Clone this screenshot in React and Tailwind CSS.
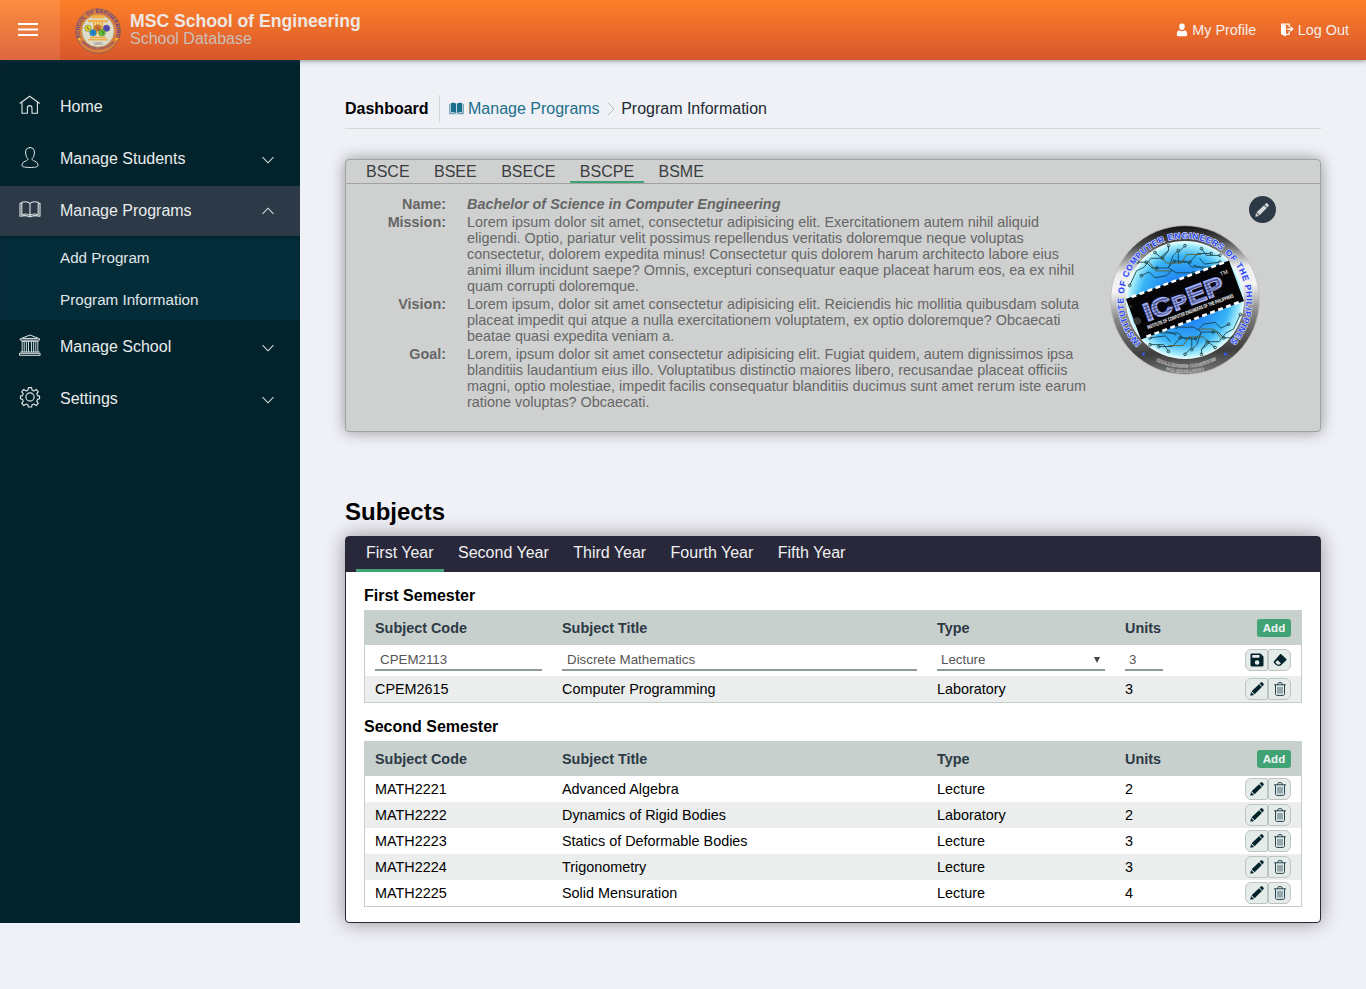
import React from "react";

const line = { fill: "none", stroke: "currentColor", strokeLinecap: "round", strokeLinejoin: "round" };

function HomeIcon() {
  return (
    <svg width="22" height="22" viewBox="0 0 22 22" {...line} strokeWidth="1.1">
      <path d="M1 9.200 10.700 2.200l9.700 7M3 8.200v11.100h5.400v-5.100a2.300 2.600 0 0 1 4.600 0v5.100h5.400V8.200" />
    </svg>
  );
}

function StudentIcon() {
  return (
    <svg width="22" height="22" viewBox="0 -.8 22 22" {...line} strokeWidth="1">
      <path d="M11 .8C8 .8 6.600 2.500 6.600 5.200c0 3.300.9 5.500 2.300 6.600.2 1.300-.7 1.900-2.400 2.500-2.300.8-3.500 2.200-3.500 4.600 0 1.200 3.600 1.800 8 1.800s8-.6 8-1.800c0-2.400-1.200-3.800-3.500-4.600-1.700-.6-2.600-1.200-2.400-2.500 1.400-1.100 2.300-3.300 2.300-6.600C15.400 2.500 14 .8 11 .8Z" />
    </svg>
  );
}

function BookIcon() {
  return (
    <svg width="22" height="22" viewBox="0 0 22 22" {...line} strokeWidth="1.1">
      <path d="M11 5.500C9.600 3.800 6.500 3.400 2.800 4.300v12.200c3.700-.8 6.800-.5 8.200.9 1.400-1.400 4.500-1.700 8.200-.9V4.300C15.500 3.400 12.400 3.800 11 5.500Zm0 0v11.900M2.600 5.300H1v12.900c3.500-.7 6.500-.7 8.500 0 .8.600 2.200.6 3 0 2-.7 5-.7 8.500 0V5.300h-1.600" />
    </svg>
  );
}

function SchoolIcon() {
  return (
    <svg width="22" height="22" viewBox="0 0 22 22" {...line} strokeWidth="1">
      <path d="M1.500 4.800 11 1l9.500 3.800v1.300h-19ZM4 4.400h14M2.800 7.300h16.400M1.800 18h18.400M.9 19.300h20.200v2H.9Z" />
      <path strokeWidth=".9" d="M3.200 8v9.500M5.200 8v9.500M7.400 8v9.500M9.500 8v9.500M12.500 8v9.500M14.600 8v9.500M16.800 8v9.500M18.800 8v9.500" />
    </svg>
  );
}

function GearIcon() {
  return (
    <svg width="22" height="22" viewBox="0 0 24 24" {...line} strokeWidth="1.300">
      <circle cx="12" cy="12" r="4.500" />
      <path d="M10.300 1.800h3.400l.6 2.800 1.900.8 2.500-1.600 2.300 2.300-1.600 2.500.8 1.900 2.200.6v2.800l-2.200.7-.8 1.900 1.600 2.500-2.300 2.300-2.500-1.600-1.900.8-.6 2.400h-3.400l-.6-2.400-1.900-.8-2.500 1.600-2.300-2.300 1.600-2.500-.8-1.900-2.200-.7v-2.800l2.200-.6.8-1.900-1.600-2.500 2.300-2.300 2.500 1.600 1.900-.8Z" />
    </svg>
  );
}

function Chevron({ up }) {
  return (
    <svg width="12" height="8" viewBox="0 0 12 8" {...line} stroke="#ced5d7" strokeWidth="1.050">
      <path d={up ? "M.8 6.600 6 1.200l5.200 5.400" : "M.8 1.400 6 6.800l5.200-5.400"} />
    </svg>
  );
}

function PencilIcon() {
  return (
    <svg width="14" height="14" viewBox="0 0 14 14" fill="currentColor">
      <path d="M.3 13.700 1 9.900l3.100 3.100ZM1.600 9.200 9 2.200l2.900 2.900-7.300 7.200ZM9.600 1.600 10.700.5c.6-.5 1.300-.4 1.800 0l.9.900c.5.500.5 1.200 0 1.800l-1.100 1.200Z" />
    </svg>
  );
}

function TrashIcon() {
  return (
    <svg className="text-[#24444f]" width="14" height="14" viewBox="0 0 14 14" {...line} strokeWidth="1">
      <path d="M1.500 2.800h11M4.600 2.600C4.600 1.300 5.200.7 6 .7h2c.8 0 1.400.6 1.400 1.900M2.500 3.200v8.600c0 1.100.5 1.600 1.400 1.600h6.200c.9 0 1.400-.5 1.400-1.600V3.200" />
      <path d="M5 5.300v5.900M7 5.300v5.900M9 5.300v5.900" strokeWidth=".8" />
    </svg>
  );
}

function SaveIcon() {
  return (
    <svg width="14" height="14" viewBox="0 0 14 14">
      <path fill="currentColor" fillRule="evenodd" d="M1.700.6h8.800l3 2.900v8.800c0 .7-.5 1.200-1.200 1.200H1.700c-.7 0-1.200-.5-1.200-1.200V1.800C.5 1.100 1 .6 1.700.6ZM2.300 2v2.800h7.200V2Zm4.800 5.200a2.300 2.300 0 1 0 0 4.600 2.300 2.300 0 0 0 0-4.600Z" />
    </svg>
  );
}

function EraserIcon() {
  return (
    <svg width="14" height="14" viewBox="0 0 14 14">
      <path fill="currentColor" fillRule="evenodd" d="M8.300 1.300 13.300 6c.4.400.4.900 0 1.300l-5 4.700c-1.200 1.100-4.100 1.200-5.200.1L1 9.900c-.5-.5-.5-1.100 0-1.600l6-7c.4-.4.900-.4 1.300 0ZM4.600 7.200 2.200 9.300l2 1.900c.7.600 1.900.6 2.700 0l1-.9Z" />
    </svg>
  );
}

function UserIcon() {
  return (
    <svg width="12" height="14" viewBox="0 0 12 14" fill="#fff">
      <path d="M6 .6c1.900 0 2.800 1.100 2.800 3S7.600 7.200 6 7.200 3.200 5.500 3.200 3.600 4.100.6 6 .6ZM3.200 7.300C4.800 8.500 7.200 8.500 8.800 7.300c1.600.5 2.400 2 2.400 4.300 0 .9-.5 1.600-1.400 1.600H2.200c-.9 0-1.400-.7-1.400-1.600 0-2.300.8-3.800 2.400-4.300Z" />
    </svg>
  );
}

function ExitIcon() {
  return (
    <svg width="14" height="14" viewBox="0 0 14 14">
      <path fill="#fff" d="M1 .9 6 2.400v11L1 11.300Z" />
      <path {...line} stroke="#fff" strokeLinecap="butt" strokeWidth="1.300" d="M1.200 1.200h8v2.900M6 11.300h3.200V8.200" />
      <path fill="#fff" d="M7.200 5.400h3.300V3.100l3.300 3-3.300 3V6.900H7.200Z" />
    </svg>
  );
}

function OpenBookIcon() {
  return (
    <svg width="15" height="13" viewBox="0 0 15 13" fill="currentColor">
      <path d="M7.100 1.800C6 .7 4.200.6 2 1v9.500c2-.4 3.800-.2 5.100.8ZM7.900 1.800C9 .7 10.800.6 13 1v9.500c-2-.4-3.800-.2-5.100.8Z" />
      <path opacity=".65" d="M1.500 1.800H.2v10.400h14.600V1.800h-1.300v9.400c-2.400-.4-4.200-.2-6 .8-1.800-1-3.600-1.200-6-.8Z" />
    </svg>
  );
}

function SchoolSeal() {
  const balls = [[13, 20.300, "#d8cf2a"], [22.700, 20, "#dd7426"], [31.500, 20.300, "#5146c4"], [18, 24.800, "#1d8fd8"], [27, 24.800, "#5cbd2b"]];
  return (
    <svg width="46" height="46" viewBox="0 0 46 46" fontFamily="Liberation Sans, sans-serif">
      <defs>
        <path id="sealTop" d="M5.600 29.800A18.500 18.500 0 1 1 40.400 29.800" />
        <path id="sealBottom" d="M6.500 34A21.400 21.400 0 0 0 39.500 34" />
      </defs>
      <circle cx="23" cy="23" r="22.200" fill="#dc8038" stroke="#80605a" strokeWidth=".8" />
      <circle cx="23" cy="23" r="16.300" fill="#dcdccb" stroke="#b48a51" strokeWidth=".7" />
      <path fill="#efb04c" d="M18 7h10l2 3.500H16ZM13 12h20v2.300H13ZM18 14.300h10v12H18ZM15 28.500h16v2H15ZM13 31h20v1.600H13Z" />
      <path stroke="#f7dfa2" strokeWidth="1" d="M20.500 14v14M23 14v14M25.500 14v14" />
      {balls.map(([x, y, c]) => (
        <circle key={x} cx={x} cy={y} r="3.300" fill={c} stroke="#62664b" strokeWidth=".4" />
      ))}
      <path d="m12 19 2 3m8-3 2 3m7-3 2 3m-16 1 2 3m8-3 2 3" stroke="#3c4657" strokeWidth=".8" />
      <text x="23" y="37.300" fontSize="4" textAnchor="middle" fill="#6c655e">1995</text>
      <text fontSize="5.300" fontWeight="700" fill="#693c89">
        <textPath href="#sealTop" textLength="70" lengthAdjust="spacing">SCHOOL OF ENGINEERING</textPath>
      </text>
      <text fontSize="3.300" fontWeight="700" fill="#693c89">
        <textPath href="#sealBottom" textLength="37" lengthAdjust="spacingAndGlyphs">MARINDUQUE STATE COLLEGE</textPath>
      </text>
      <circle cx="4.200" cy="31" r="1.200" fill="#ffbb27" />
      <circle cx="41.800" cy="31" r="1.200" fill="#ffbb27" />
    </svg>
  );
}

function Circuit() {
  return (
    <g fill="none" stroke="#183e46" strokeWidth=".9">
      <path d="M18 60l7-15 8-4 7-9 12 0 6-8 0-5M26 36l9 0 6 6 16 0 7-7 12 0 6 6 20 0M44 26l6 5 8-7M68 24l-5 5-5 13 8 5 18 0M75 19l-7 7 0 10 12 0 8-9 14 0M92 22l5 7 14 0M90 32l5 6 16-2M30 50l8-4 6 6 12-2 6-6M84 39l11 4" />
      <path stroke="#635c21" d="M50 30l6 7 15 0 6-9 15 0M38 36l7 9 15 0" />
      {[[18, 60], [26, 36], [44, 26], [58, 19], [68, 24], [75, 19], [92, 22], [102, 27], [111, 29], [111, 36], [30, 50], [84, 47], [52, 32], [35, 36], [64, 35], [80, 36], [46, 42]].map(([x, y]) => (
        <circle key={x + "-" + y} cx={x} cy={y} r="1.400" />
      ))}
    </g>
  );
}

function ProgramSeal() {
  const pins = Array.from({ length: 12 }, (_, i) => i);
  return (
    <svg width="150" height="150" viewBox="0 0 150 150" fontFamily="Liberation Sans, sans-serif">
      <defs>
        <linearGradient id="ring" x1=".47" y1="0" x2=".53" y2="1">
          <stop offset="0" stopColor="#111" />
          <stop offset=".12" stopColor="#4d4d4d" />
          <stop offset=".3" stopColor="#eee" />
          <stop offset=".42" stopColor="#f4f4f4" />
          <stop offset=".6" stopColor="#888" />
          <stop offset=".85" stopColor="#3e3e3e" />
          <stop offset="1" stopColor="#777" />
        </linearGradient>
        <radialGradient id="core">
          <stop offset="0" stopColor="#2f4ff2" />
          <stop offset=".4" stopColor="#2288f4" />
          <stop offset=".75" stopColor="#38b4f5" />
          <stop offset=".93" stopColor="#a4ecfb" />
          <stop offset="1" stopColor="#f2ffff" />
        </radialGradient>
        <path id="ringTop" d="M31.100 118A61.500 61.500 0 1 1 118.900 118" />
        <path id="ringLow" d="M36 130A67.500 67.500 0 0 0 114 130" />
        <path id="ringLowest" d="M43 140.300A72.700 72.700 0 0 0 107 140.300" />
      </defs>
      <circle cx="75" cy="75" r="74.300" fill="url(#ring)" stroke="#b4b6b6" strokeWidth=".7" />
      <circle cx="75" cy="75" r="59" fill="url(#core)" />
      <g transform="translate(75 75) scale(.97) translate(-75 -75)">
        <Circuit />
        <g transform="rotate(180 75 75)"><Circuit /></g>
      </g>
      <text fontSize="8.400" fontWeight="700" fill="#2743ef" stroke="#dce2ff" strokeWidth="1.200" paintOrder="stroke">
        <textPath href="#ringTop" textLength="286">INSTITUTE OF COMPUTER ENGINEERS OF THE PHILIPPINES</textPath>
      </text>
      <text fontSize="4.200" fill="#333" stroke="#ccc" strokeWidth=".7" paintOrder="stroke">
        <textPath href="#ringLow" startOffset="12" textLength="62">CHALLENGING OURSELVES</textPath>
      </text>
      <text fontSize="3.900" fill="#333" stroke="#ccc" strokeWidth=".7" paintOrder="stroke">
        <textPath href="#ringLowest" startOffset="14" textLength="38">FOR EXCELLENCE</textPath>
      </text>
      <circle cx="33.500" cy="129" r="1.600" fill="#3157ee" />
      <circle cx="115.500" cy="129" r="1.600" fill="#3157ee" />
      <g transform="translate(75 75) rotate(-20.500)">
        <rect x="-55" y="-21.500" width="110" height="43" fill="#050507" />
        {pins.map((i) => (
          <path key={i} d={`M${-49 + i * 8.500} -21.500h5M${-49 + i * 8.500} 21h5`} stroke="#fff" strokeWidth="2.600" />
        ))}
        <circle cx="-53" cy="-13" r="1.700" fill="#272727" />
        <circle cx="-52" cy="3" r="3.700" fill="#333" />
        <g fontSize="25" fontWeight="700" fill="#6570a8" stroke="#a4b0f8" strokeWidth="1.500">
          <text x="-43" y="7" textLength="29" lengthAdjust="spacingAndGlyphs">IC</text>
          <text x="-13" y="7" fontSize="19" textLength="15" lengthAdjust="spacingAndGlyphs">P</text>
          <text x="3" y="7" textLength="38" lengthAdjust="spacingAndGlyphs">EP</text>
        </g>
        <path d="M-42-8h80M-42-5h80M-42-2h80M-42 1h80M-42 4h80" stroke="#171b3b" strokeWidth=".5" />
        <text x="42" y="-10" fontSize="5.500" fill="#fff">TM</text>
        <g transform="translate(-45 14.500) scale(.59 1)">
          <text fontSize="5.300" fontWeight="700" fill="#fff">INSTITUTE OF COMPUTER ENGINEERS OF THE PHILIPPINES</text>
        </g>
      </g>
    </svg>
  );
}

function NavItem({ icon, label, arrow, active }) {
  return (
    <a className={"flex h-[50px] items-center pr-[26px] pl-[19px] text-[#e8ecec] " + (active ? "bg-[#2c3946]" : "")}>
      <span className="-mt-1 w-[41px] text-[#dfe5e6]">{icon}</span>
      <span className="-mt-px flex-1">{label}</span>
      {arrow && <span className={arrow === "up" ? "" : "mt-0.5"}><Chevron up={arrow === "up"} /></span>}
    </a>
  );
}

function Sidebar() {
  return (
    <nav className="flex h-[863px] w-[300px] shrink-0 flex-col gap-0.5 bg-[#03232c] pt-[22px]">
      <NavItem icon={<HomeIcon />} label="Home" />
      <NavItem icon={<StudentIcon />} label="Manage Students" arrow="down" />
      <div>
        <NavItem icon={<BookIcon />} label="Manage Programs" arrow="up" active />
        <div className="h-[84px] bg-[#042d39] pt-px text-[15.200px] text-[#e0e5e7] shadow-[inset_0_2px_2px_rgba(0,0,0,0.2)]">
          <a className="flex h-[42px] items-center pl-[60px]">Add Program</a>
          <a className="flex h-[42px] items-center pl-[60px]">Program Information</a>
        </div>
      </div>
      <NavItem icon={<SchoolIcon />} label="Manage School" arrow="down" />
      <NavItem icon={<GearIcon />} label="Settings" arrow="down" />
    </nav>
  );
}

function Header() {
  return (
    <header className="relative z-10 flex h-[60px] items-center bg-linear-to-b from-[#fd8029] to-[#d8562b] text-[#f5efec] shadow-[0_1px_5px_rgba(40,60,75,0.5)]">
      <button className="flex h-[60px] w-[60px] items-center bg-white/10 pl-[18px]" aria-label="Menu">
        <svg className="-mt-px" width="20" height="13" viewBox="0 0 20 13" fill="#fff">
          <path d="M0 0h20v2H0zM0 5.600h20v2H0zM0 11h20v2H0z" />
        </svg>
      </button>
      <div className="mt-px ml-[15px]"><SchoolSeal /></div>
      <div className="-mt-0.5 ml-[9px]">
        <h1 className="text-[17.600px] leading-5 font-bold text-[#eee8e4]">MSC School of Engineering</h1>
        <p className="text-base leading-4 text-[#cbbfb9]">School Database</p>
      </div>
      <div className="mt-px mr-[17px] ml-auto flex items-center gap-[23.500px] text-[14.400px]">
        <a className="flex items-center gap-1"><UserIcon />My Profile</a>
        <a className="flex items-center gap-1"><ExitIcon />Log Out</a>
      </div>
    </header>
  );
}

const mission = "Lorem ipsum dolor sit amet, consectetur adipisicing elit. Exercitationem autem nihil aliquid eligendi. Optio, pariatur velit possimus repellendus veritatis doloremque neque voluptas consectetur, dolorem expedita minus! Consectetur quis dolorem harum architecto labore eius animi illum incidunt saepe? Omnis, excepturi consequatur eaque placeat harum eos, ea ex nihil quam corrupti doloremque.";
const vision = "Lorem ipsum, dolor sit amet consectetur adipisicing elit. Reiciendis hic mollitia quibusdam soluta placeat impedit qui atque a nulla exercitationem voluptatem, ex optio doloremque? Obcaecati beatae quasi expedita veniam a.";
const goal = "Lorem, ipsum dolor sit amet consectetur adipisicing elit. Fugiat quidem, autem dignissimos ipsa blanditiis laudantium eius illo. Voluptatibus distinctio maiores libero, recusandae placeat officiis magni, optio molestiae, impedit facilis consequatur blanditiis ducimus sunt amet rerum iste earum ratione voluptas? Obcaecati.";

function ProgramCard() {
  return (
    <section className="mt-[30px] h-[273px] rounded-[4px] border border-[#9fa5a5] bg-[#cfd1d0] shadow-[0_0_15px_rgba(0,0,0,0.4)]">
      <div className="flex h-6 gap-[4.450px] border-b border-[#a4a1a3] pl-2.5 text-[#3a3d40]">
        {["BSCE", "BSEE", "BSECE", "BSCPE", "BSME"].map((t) => (
          <a key={t} className={"h-[23px] border-b-2 px-2.5 leading-[23px] " + (t === "BSCPE" ? "border-[#41a375]" : "border-transparent")}>{t}</a>
        ))}
      </div>
      <div className="flex pt-3 text-[14.400px] leading-4 text-[#666]">
        <dl className="grid w-[745px] grid-cols-[100px_624px] gap-x-[21px] gap-y-0.5">
          <dt className="text-right font-bold">Name:</dt>
          <dd className="font-bold italic">Bachelor of Science in Computer Engineering</dd>
          <dt className="text-right font-bold">Mission:</dt><dd>{mission}</dd>
          <dt className="text-right font-bold">Vision:</dt><dd>{vision}</dd>
          <dt className="text-right font-bold">Goal:</dt><dd>{goal}</dd>
        </dl>
        <div className="relative mt-[30px] ml-[19px] h-[150px] w-[150px]">
          <div className="-mt-px"><ProgramSeal /></div>
          <button className="absolute -top-[30px] left-[139px] flex h-[27px] w-[27px] items-center justify-center rounded-full bg-[#2c3946] pr-px text-[#d5d9da]" aria-label="Edit program">
            <PencilIcon />
          </button>
        </div>
      </div>
    </section>
  );
}

function Actions({ editing }) {
  const base = "flex h-[22px] w-[23px] items-center justify-center border border-[#bdc5c3] bg-[#e5ebe9] text-[#03232c] ";
  return (
    <div className="flex">
      <button className={base + "rounded-l-[6px] rounded-r-[2px]"}>{editing ? <SaveIcon /> : <PencilIcon />}</button>
      <button className={base + "rounded-l-[2px] rounded-r-[6px]"}>{editing ? <EraserIcon /> : <TrashIcon />}</button>
    </div>
  );
}

const cols = "grid grid-cols-[187px_375px_188px_1fr_auto] items-center px-2.5 ";
const field = "mb-px h-[23px] border-b-2 border-[#8f9a97] text-[13.333px] leading-[23px] text-[#555] ";

function EditRow() {
  return (
    <div className={cols + "h-[31px] bg-white pb-px"}>
      <div className={field + "w-[167px] pl-[5px]"}>CPEM2113</div>
      <div className={field + "w-[355px] pl-[5px]"}>Discrete Mathematics</div>
      <div className={field + "flex w-[168px] justify-between pr-1 pl-1"}>
        <span>Lecture</span>
        <svg className="mt-2" width="8" height="8" viewBox="0 0 8 8" fill="#444"><path d="M1 1h6L4 7Z" /></svg>
      </div>
      <div className={field + "w-[38px] pl-1"}>3</div>
      <Actions editing />
    </div>
  );
}

function Semester({ title, rows, editing, className }) {
  return (
    <div className={className}>
      <h3 className="h-[25px] text-base leading-[21px] font-bold">{title}</h3>
      <div className="border border-t-0 border-[#c7cdcb] text-[14.400px]">
        <div className={cols + "-mx-px h-[35px] border-x border-[#c8d0cd] bg-[#c8d0cd] font-bold text-[#2c3946]"}>
          {["Subject Code", "Subject Title", "Type", "Units"].map((h) => <span key={h} className="pt-0.5">{h}</span>)}
          <button className="h-[18px] w-[34px] rounded-[3px] bg-[#41a375] text-[11.520px] leading-[18px] font-bold text-[#f1f5f2]">Add</button>
        </div>
        {editing && <EditRow />}
        {rows.map((r, i) => (
          <div key={r[0]} className={cols + "h-[26px] " + ((i + (editing ? 1 : 0)) % 2 ? "bg-[#ebeeed]" : "bg-white")}>
            {r.map((c, j) => <span key={j} className="pt-0.5">{c}</span>)}
            <Actions />
          </div>
        ))}
      </div>
    </div>
  );
}

const second = [
  ["MATH2221", "Advanced Algebra", "Lecture", "2"],
  ["MATH2222", "Dynamics of Rigid Bodies", "Laboratory", "2"],
  ["MATH2223", "Statics of Deformable Bodies", "Lecture", "3"],
  ["MATH2224", "Trigonometry", "Lecture", "3"],
  ["MATH2225", "Solid Mensuration", "Lecture", "4"],
];

function SubjectsCard() {
  return (
    <section className="h-[387px] overflow-visible rounded-[4px] border border-[#28283a] bg-white shadow-[0_0_20px_rgba(0,0,0,0.4)]">
      <div className="flex h-[35px] gap-[4.450px] bg-[#28283a] pl-2.5 text-[#f0f0f2]">
        {["First Year", "Second Year", "Third Year", "Fourth Year", "Fifth Year"].map((t, i) => (
          <a key={t} className={"h-[35px] border-b-3 px-2.5 leading-[32px] " + (i === 0 ? "border-[#41a375]" : "border-transparent")}>{t}</a>
        ))}
      </div>
      <div className="px-[18px] pt-[13px]">
        <Semester title="First Semester" editing rows={[["CPEM2615", "Computer Programming", "Laboratory", "3"]]} />
        <Semester title="Second Semester" className="mt-[13px]" rows={second} />
      </div>
    </section>
  );
}

export default function App() {
  return (
    <div className="h-[989px] overflow-hidden bg-[#f0f1f7] font-['Liberation_Sans',Arial,sans-serif] text-base text-black">
      <Header />
      <div className="flex">
        <Sidebar />
        <main className="w-[1066px] px-[45px] pt-[35px]">
          <div className="flex h-[34px] items-start border-b border-[#d4d6da]">
            <h2 className="h-7 w-[95px] border-r border-[#d4d6da] leading-[27px] font-bold">Dashboard</h2>
            <div className="ml-[9px] flex h-[27px] items-center text-[#1b6f8a]">
              <OpenBookIcon />
              <span className="ml-1">Manage Programs</span>
              <svg className="mt-px mr-[6.500px] ml-[7px]" width="8" height="14" viewBox="0 0 8 14" {...line} stroke="#b6babd"><path d="M1 1l6 6-6 6" /></svg>
              <span className="text-[#222b32]">Program Information</span>
            </div>
          </div>
          <ProgramCard />
          <h2 className="mt-[66px] mb-[10px] text-2xl leading-7 font-bold">Subjects</h2>
          <SubjectsCard />
        </main>
      </div>
    </div>
  );
}
